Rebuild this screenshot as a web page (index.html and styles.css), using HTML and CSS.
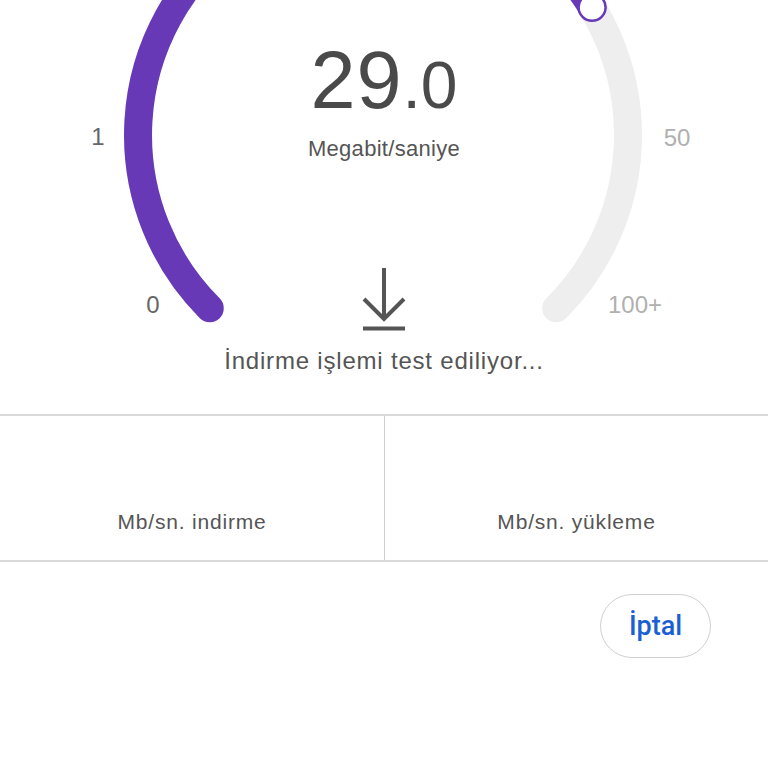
FILE: index.html
```html
<!DOCTYPE html>
<html lang="tr">

<head>
  <meta charset="UTF-8">
  <meta name="viewport" content="width=device-width, initial-scale=1.0">
  <title>İnternet hız testi</title>
  <link rel="stylesheet" href="styles.css">
</head>

<body>
  <main class="speedtest">

    <section class="gauge">
      <!-- dial: centre (383,135), r 245, 270 degree sweep -->
      <svg class="gauge-dial" width="768" height="340" viewBox="0 0 768 340">
        <path class="track" d="M 209.76 308.24 A 245 245 0 1 1 556.24 308.24" />
        <path class="fill" d="M 209.76 308.24 A 245 245 0 1 1 592.1 7.3" />
        <circle class="knob" cx="592.1" cy="7.3" r="13.5" />
        <text class="tick passed" x="153" y="313">0</text>
        <text class="tick passed" x="98" y="145">1</text>
        <text class="tick" x="677" y="146">50</text>
        <text class="tick" x="635" y="313">100+</text>
      </svg>

      <div class="speed"><span class="speed-int">29</span><span class="speed-dec">.0</span></div>
      <div class="unit">Megabit/saniye</div>

      <svg class="phase-icon" width="48" height="68" viewBox="0 0 48 68">
        <path d="M24 3 V54 M4 34 L24 54 L44 34" />
        <path d="M3 63.5 H45" />
      </svg>
      <p class="phase-text">İndirme işlemi test ediliyor...</p>
    </section>

    <section class="results">
      <div class="result">Mb/sn. indirme</div>
      <div class="result">Mb/sn. yükleme</div>
    </section>

    <div class="actions">
      <button class="cancel">İptal</button>
    </div>

  </main>
</body>

</html>
```

FILE: styles.css
```css
body {
  margin: 0;
  background-color: #fff;
  font-family: "Liberation Sans", Arial, sans-serif;
  color: #555;
}

.gauge {
  position: relative;
  height: 414px;
  display: flex;
  flex-direction: column;
  align-items: center;
  padding-top: 40px;
  box-sizing: border-box;
}

.gauge-dial {
  position: absolute;
  top: 0;
  left: 0;
}

.track,
.fill {
  fill: none;
  stroke-width: 28;
  stroke-linecap: round;
}

.track {
  stroke: #eeeeee;
}

.fill {
  stroke: #6739b7;
}

.knob {
  fill: #fff;
  stroke: #6739b7;
  stroke-width: 2.5;
}

.tick {
  font-family: "Liberation Sans", Arial, sans-serif;
  font-size: 24px;
  text-anchor: middle;
  fill: #b0b0b0;
}

.tick.passed {
  fill: #666;
}

.speed {
  position: relative;
  font-size: 81px;
  line-height: 80px;
  color: #4a4a4a;
}

.speed-int {
  letter-spacing: 1px;
}

.speed-dec {
  font-size: 66px;
}

.unit {
  position: relative;
  margin-top: 13px;
  font-size: 22px;
  line-height: 22px;
  letter-spacing: 0.3px;
  color: #555;
}

.phase-icon {
  position: relative;
  margin-top: 105px;
  fill: none;
  stroke: #555;
  stroke-width: 4;
}

.phase-text {
  margin: 16px 0 0;
  font-size: 24px;
  line-height: 24px;
  letter-spacing: 0.8px;
  color: #555;
}

.results {
  display: grid;
  grid-template-columns: 1fr 1fr;
  border-top: 2px solid #dadada;
  border-bottom: 2px solid #dadada;
}

.result {
  height: 144px;
  display: flex;
  align-items: flex-end;
  justify-content: center;
  padding-bottom: 28px;
  box-sizing: border-box;
  font-size: 21px;
  line-height: 21px;
  letter-spacing: 0.8px;
  color: #555;
}

.result + .result {
  border-left: 1px solid #cfcfcf;
}

.actions {
  display: flex;
  justify-content: flex-end;
  padding: 32px 57px 0 0;
}

.cancel {
  width: 111px;
  height: 64px;
  border: 1.5px solid #d0d0d0;
  border-radius: 32px;
  background-color: #fff;
  color: #1a5fd4;
  font-family: Roboto, "Liberation Sans", sans-serif;
  font-size: 27px;
  font-weight: 500;
  padding: 0;
  cursor: pointer;
}
```
